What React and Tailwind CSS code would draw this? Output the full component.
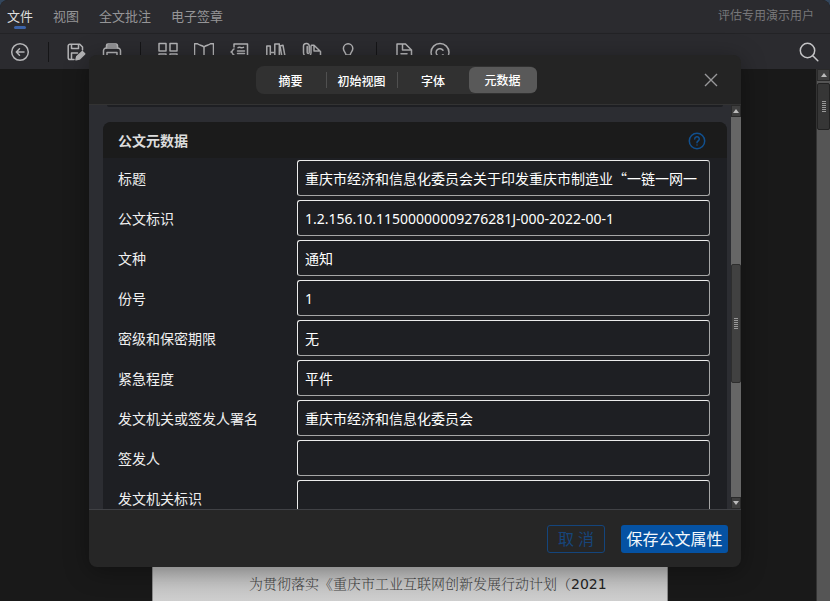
import React from "react";

const menus = ["文件", "视图", "全文批注", "电子签章"];
const tabs = ["摘要", "初始视图", "字体", "元数据"];
const fields = [
  ["标题", "重庆市经济和信息化委员会关于印发重庆市制造业“一链一网一"],
  ["公文标识", "1.2.156.10.11500000009276281J-000-2022-00-1"],
  ["文种", "通知"],
  ["份号", "1"],
  ["密级和保密期限", "无"],
  ["紧急程度", "平件"],
  ["发文机关或签发人署名", "重庆市经济和信息化委员会"],
  ["签发人", ""],
  ["发文机关标识", ""],
];

function Icon({ children }) {
  return (
    <svg
      viewBox="0 0 20 20"
      className="size-5"
      fill="none"
      stroke="currentColor"
      strokeWidth="1.5"
      strokeLinecap="round"
      strokeLinejoin="round"
      aria-hidden="true"
    >
      {children}
    </svg>
  );
}

const icons = {
  back: (
    <>
      <circle cx="10" cy="10" r="8.3" />
      <path d="M14 10H6.5M9.5 6.8 6.3 10l3.2 3.2" />
    </>
  ),
  save: (
    <>
      <path d="M8 17.5H4a1.8 1.8 0 0 1-1.8-1.8V4A1.8 1.8 0 0 1 4 2.2h9.8L16.5 5v3M5.5 2.5v4h7v-4M5.5 17v-6h6" />
      <path d="m10 17.8.8-3.3 5.5-5 2.4 2.4-5.4 5.2z" fill="currentColor" />
    </>
  ),
  print: (
    <>
      <path d="M4.5 14H1.5V8.8A2.8 2.8 0 0 1 4.300 6h11.400a2.800 2.800 0 0 1 2.800 2.800V14h-3" />
      <path d="M4.500 6V3.500A1.500 1.500 0 0 1 6 2h8a1.500 1.500 0 0 1 1.500 1.500V6M5 4h10M5 10.500h10V17H5z" />
    </>
  ),
  grid: <path d="M1 1.500h7v7.500H1zM12 1.500h7v7.500h-7zM1 12h7v6H1zM12 12h7v6h-7z" />,
  book: <path d="M10 5C8 3 5.500 3.500 3.500 1.800H.5V17c4 0 7.500 0 9.500 1.500 2-1.500 5.500-1.500 9.500-1.500V1.800h-3C14.500 3.500 12 3 10 5zM10 5v13" />,
  script: (
    <>
      <path d="M4 5V2h13.500v16H4v-3M4 7c-1.500 0-1.200 3-3 3 1.800 0 1.500 3 3 3" />
      <path d="M8 5.800c1.500-1.500 3 .8 5.500-.5M7.500 9h7M7.500 11.500h7M7.500 14h7" />
    </>
  ),
  shelf: (
    <path d="M.8 4h3.500v14H.8zM4.300 6v12M4.300 10.500h4.500M8.800 4v14M8.800 2h4.500v16H8.800M14 4l3-.7L19.500 17l-3 .8zM8.800 6v-4" />
  ),
  clip: (
    <>
      <path d="M5.200 4.500v6a1 1 0 0 0 2 0V4a2.500 2.500 0 0 0-2.500-2.600h-.4A2.700 2.700 0 0 0 1.500 4v6.500a3.600 3.600 0 0 0 7.500.5V4" />
      <path d="M9.500 3.200h2.500L18.500 9.500V18H6v-2.500M12 3.500v5.500h6" />
    </>
  ),
  bulb: (
    <path d="M8 13c0-2.500-2.600-3.500-2.600-6.500a4.700 4.700 0 0 1 9.400 0c0 3-2.600 4-2.600 6.500zM8 15.500h4.200M8.800 18h2.500" />
  ),
  file: <path d="M3 18V2h8.500L17.500 8v10zM8.500 2.500V8h8.500M7 11.800h6" />,
  copyright: (
    <>
      <circle cx="10" cy="10.500" r="9" />
      <path d="M13 8.300a3.800 3.800 0 1 0 0 4.400" />
    </>
  ),
};

const toolbar = [
  ["back", "返回"],
  null,
  ["save", "保存"],
  ["print", "打印"],
  null,
  ["grid", "缩略图"],
  ["book", "阅读"],
  ["script", "批注"],
  ["shelf", "书库"],
  ["clip", "附件"],
  ["bulb", "提示"],
  null,
  ["file", "文档"],
  ["copyright", "版权"],
];

function Grip() {
  return (
    <span className="flex flex-col gap-px" aria-hidden="true">
      {[0, 1, 2, 3, 4, 5].map((n) => (
        <span key={n} className="h-px w-1 bg-[#999]" />
      ))}
    </span>
  );
}

function ArrowCap({ down }) {
  return (
    <div className="flex h-3 shrink-0 items-center justify-center border border-[#2a2a2a] bg-[#3f3f3f] text-[#bbb]">
      <svg viewBox="0 0 6 4" className="h-1 w-1.5" fill="currentColor" aria-hidden="true">
        <path d={down ? "M0 0h6L3 4z" : "M0 4h6L3 0z"} />
      </svg>
    </div>
  );
}

export default function App() {
  return (
    <div className="h-screen overflow-hidden bg-[#33465c] font-['Noto_Sans','Noto_Sans_CJK_SC',sans-serif] text-white">
      <div className="relative flex h-full flex-col overflow-hidden rounded-t-lg bg-[#191919]">
        <header className="bg-[#2b2b2f]">
          <nav className="flex h-[34px] items-center border-b border-[#232326] pr-4 pb-0.5 pl-[7px] text-xs text-[#959597]">
            <div className="flex flex-1 gap-5">
              {menus.map((name, i) => (
                <button
                  key={name}
                  className={
                    i === 0
                      ? "relative text-[13px] leading-8 text-[#dedede]"
                      : "text-[13px] leading-8"
                  }
                >
                  {name}
                  {i === 0 && (
                    <span className="absolute bottom-[3px] left-1/2 h-[3px] w-3 -translate-x-1/2 rounded-full bg-[#3c63a8]" />
                  )}
                </button>
              ))}
            </div>
            <span className="text-[#77777a]">评估专用演示用户</span>
          </nav>
          <div className="flex h-[35px] items-center pr-[11px] pl-0.5 text-[#b4b4b6]">
            {toolbar.map((item, i) =>
              item ? (
                <button key={i} aria-label={item[1]} className="flex w-9 justify-center">
                  <Icon>{icons[item[0]]}</Icon>
                </button>
              ) : (
                <span key={i} className="flex w-5 justify-center">
                  <span className="h-5 w-px bg-[#151517]" />
                </span>
              )
            )}
            <button aria-label="搜索" className="ml-auto text-[#c4c4c6]">
              <Icon>
                <circle cx="8.500" cy="8.500" r="7.200" />
                <path d="m13.800 13.800 5 5" />
              </Icon>
            </button>
          </div>
        </header>

        <main className="flex min-h-0 flex-1">
          <div className="flex flex-1 justify-center overflow-hidden pl-1">
            <article className="w-[516px] border-x border-[#8a8a8a] bg-linear-to-b from-[#bdbdbd] from-94% to-[#cecece] px-24 pt-[504px] text-[#444]">
              <p className="text-sm leading-5 whitespace-nowrap">
                <span className="font-['Noto_Serif_CJK_SC','Noto_Sans_CJK_SC',sans-serif] font-light">
                  为贯彻落实《重庆市工业互联网创新发展行动计划（
                </span>
                <span className="font-['DejaVu_Sans',sans-serif] text-[#222]">2021</span>
              </p>
            </article>
          </div>
          <div className="flex w-[14px] flex-col border-l border-[#333] bg-[#555]">
            <ArrowCap />
            <div className="mt-0.5 flex h-[47px] items-center justify-center rounded-xs border border-[#222] bg-[#363636]">
              <Grip />
            </div>
          </div>
        </main>

        <div className="absolute inset-0 flex items-start justify-center pt-[55px]">
          <section
            role="dialog"
            aria-label="文档属性"
            className="flex h-[512px] w-full max-w-[652px] flex-col overflow-hidden rounded-lg bg-[#262626] shadow-[0_4px_24px_rgba(0,0,0,0.35)]"
          >
            <div className="flex h-[50px] shrink-0 items-center border-b border-[#333] bg-[#242424] pr-5">
              <span className="flex-1" />
              <div role="tablist" className="mr-[18px] flex h-7 items-center rounded-lg bg-[#313131] text-xs font-medium">
                {tabs.map((name, i) => (
                  <button
                    key={name}
                    role="tab"
                    aria-selected={i === 3}
                    className={
                      i === 3
                        ? "h-[26px] w-[68px] rounded-md bg-[#595959] pt-0.5"
                        : i === 2
                          ? "h-4 w-[71px] pt-0.5 leading-4"
                          : "h-4 w-[71px] border-r border-[#505050] pt-0.5 leading-4"
                    }
                  >
                    {name}
                  </button>
                ))}
              </div>
              <div className="flex flex-1 justify-end">
                <button aria-label="关闭" className="text-[#98989a]">
                  <svg viewBox="0 0 20 20" className="size-5" fill="none" stroke="currentColor" strokeWidth="1.4" aria-hidden="true">
                    <path d="m4 4 12 12M16 4 4 16" />
                  </svg>
                </button>
              </div>
            </div>

            <div className="flex min-h-0 flex-1 bg-[#2c2d32]">
              <div className="min-w-0 flex-1 overflow-hidden pr-1 pl-[14px]">
                <div className="mx-1 h-0.5 rounded-b-lg bg-[#1e1f23]" />
                <div className="mt-[15px] overflow-hidden rounded-t-lg bg-[#1e1f23]">
                  <div className="flex h-9 items-center justify-between bg-[#1b1b1b] pt-0.5 pr-[21px] pl-[15px]">
                    <h2 className="text-sm font-bold text-[#dcdcdc]">公文元数据</h2>
                    <button aria-label="帮助" className="text-[#11508f]">
                      <svg viewBox="0 0 18 18" className="size-[18px]" fill="none" stroke="currentColor" strokeWidth="1.5" strokeLinecap="round" aria-hidden="true">
                        <circle cx="9" cy="9" r="7.700" />
                        <path d="M6.700 7a2.300 2.300 0 1 1 3.400 2c-.8.500-1.100.900-1.100 1.700M9 13v.1" />
                      </svg>
                    </button>
                  </div>
                  {fields.map(([label, value], i) => (
                    <div key={label} className="flex h-10 items-center pr-[17px] pl-[15px] text-sm">
                      <label htmlFor={"field-" + i} className="w-[179px] shrink-0 pt-0.5 text-[#f0f0f0]">
                        {label}
                      </label>
                      <input
                        id={"field-" + i}
                        defaultValue={value}
                        className={
                          i === 0
                            ? "h-9 min-w-0 flex-1 rounded-[3px] border border-[#a6a6a6] border-t-[#ececec] border-l-[#ececec] bg-[#1e1f23] px-[7px] font-['Noto_Sans_CJK_SC',sans-serif]"
                            : "h-9 min-w-0 flex-1 rounded-[3px] border border-[#a6a6a6] border-t-[#ececec] border-l-[#ececec] bg-[#1e1f23] px-[7px]"
                        }
                      />
                    </div>
                  ))}
                </div>
              </div>
              <div className="flex w-[10px] flex-col bg-[#666]">
                <ArrowCap />
                <div className="mt-[147px] flex h-[119px] items-center justify-center rounded-xs border border-[#2e2e2e] bg-[#414141]">
                  <Grip />
                </div>
                <span className="flex-1" />
                <ArrowCap down />
              </div>
            </div>

            <footer className="flex h-[58px] shrink-0 items-center justify-end gap-4 border-t border-[#404145] pr-[13px] text-base">
              <button className="h-7 w-[58px] rounded-[3px] border border-[#14457c] text-[#17457a]">
                取 消
              </button>
              <button className="h-7 w-[107px] rounded-[3px] bg-[#0552a3] text-[#f4f8fc]">
                保存公文属性
              </button>
            </footer>
          </section>
        </div>
      </div>
    </div>
  );
}
